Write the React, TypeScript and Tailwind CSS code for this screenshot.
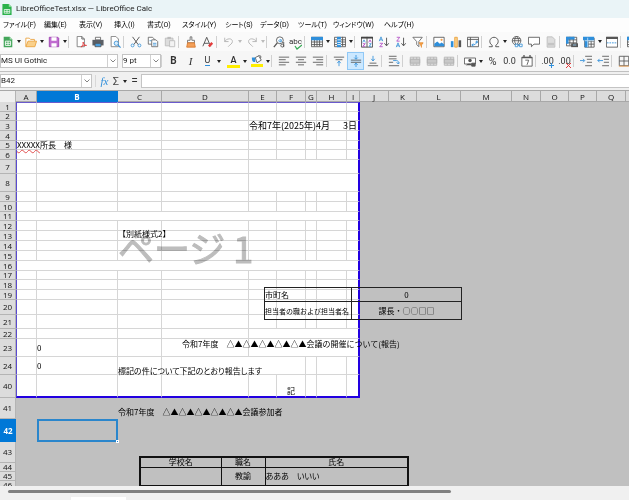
import React from "react";

const P = {
  stroke: "#555",
  strokeWidth: 1,
  fill: "none",
} as const;

const icons: Record<string, React.ReactNode> = {
  new: (
    <>
      <path d="M2 1h7l3 3v9H2z" fill="#43a65a" />
      <path d="M9 1l3 3H9z" fill="#a5dcb0" />
      <path d="M4 6h6v5H4zM4 8.500h6M7 6v5" stroke="#fff" fill="none" />
    </>
  ),
  open: (
    <>
      <path d="M1 12V2.500h4l1.500 1.500H11v2" fill="#fff" stroke="#e9a03b" />
      <path d="M1 12.500L3.500 6H13.500L11.500 12.500z" fill="#fad08a" stroke="#e9a03b" />
    </>
  ),
  save: (
    <>
      <path d="M1.500 1.500h10l1 1v10h-11z" fill="#c06bd0" stroke="#9b3fae" />
      <path d="M4 1.500h6v4H4zM4 8.500h6v4H4z" fill="#fff" />
    </>
  ),
  pdf: (
    <>
      <path d="M2.500 .5H8l3 3v9H2.500z" fill="#fff" stroke="#777" />
      <path d="M8 .5v3h3" {...P} />
      <path d="M7 13c2-2 3-4 2.500-6 0 3 2 4 4 4-3-.5-5 .5-6.500 2z" stroke="#e23b3b" fill="none" />
    </>
  ),
  print: (
    <>
      <path d="M4 1.500h6v3H4z" fill="#fff" stroke="#666" />
      <path d="M.5 4.500h13V11H.5z" fill="#5a5f66" />
      <path d="M3.500 8.500h7v4h-7z" fill="#4aa0e0" stroke="#555" />
    </>
  ),
  preview: (
    <>
      <path d="M2.500 .5H8l3 3v9H2.500z" fill="#fff" stroke="#777" />
      <circle cx="8.500" cy="8.500" r="2.500" fill="#d8ecfa" stroke="#3d93d6" />
      <path d="M10.500 10.500l3 3" stroke="#3d93d6" strokeWidth="1.300" />
    </>
  ),
  cut: (
    <>
      <path d="M3 1l6.500 9M11 1L4.500 10" stroke="#444" />
      <circle cx="3" cy="11" r="1.700" fill="none" stroke="#3d93d6" />
      <circle cx="11" cy="11" r="1.700" fill="none" stroke="#3d93d6" />
    </>
  ),
  copy: (
    <>
      <path d="M1.500 1.500h5l2 2v6h-7z" fill="#fff" stroke="#666" />
      <path d="M5.500 4.500h5l2 2v6h-7z" fill="#fff" stroke="#666" />
      <path d="M7 8.500h4M7 10.500h4M3 5.500h2" stroke="#3d93d6" />
    </>
  ),
  paste: (
    <>
      <path d="M1.500 2.500h9v9h-9z" fill="#ddd" stroke="#bbb" />
      <path d="M4 1h4v2.500H4z" fill="#bbb" />
      <path d="M6.500 5.500h6v7h-6z" fill="#f3f3f3" stroke="#bbb" />
    </>
  ),
  brush: (
    <>
      <path d="M6 1h2v4h3v3H3V5h3z" fill="#fff" stroke="#666" />
      <path d="M3 8h8l1 5H2z" fill="#f3a05a" stroke="#d8782c" />
    </>
  ),
  clear: (
    <>
      <path d="M1 12L5.500 1.500 10 12M2.500 8.500H8" stroke="#444" fill="none" />
      <path d="M7 11l4-4 2 2-4 4z" fill="#e23b3b" />
    </>
  ),
  undo: <path d="M2 2v4.500h4.500M2 6.500C4 2.500 11 2 11 6.500 11 9 8 10 6 12.500" stroke="#b0b0b0" fill="none" />,
  redo: <path d="M12 2v4.500H7.500M12 6.500C10 2.500 3 2 3 6.500 3 9 6 10 8 12.500" stroke="#b0b0b0" fill="none" />,
  find: (
    <>
      <circle cx="8" cy="5" r="4" fill="#fff" stroke="#555" />
      <path d="M5 8l-4 5" stroke="#555" strokeWidth="1.500" />
      <path d="M9.500 4v3M9.500 5.500a1.300 1.300 0 1 0 0 .2" stroke="#3d93d6" fill="none" />
      <path d="M12.500 7v6M12.500 11a1.700 1.700 0 1 0 0 .3" stroke="#444" fill="none" />
    </>
  ),
  table: (
    <>
      <path d="M.5 1.500h13v11H.5zM.5 7h13M.5 10h13M4 4v8M7 4v8M10 4v8" {...P} />
      <path d="M0 1h14v4H0z" fill="#2f8fdb" />
    </>
  ),
  cols: (
    <>
      <path d="M.5 1.500h13v11H.5zM.5 4.500h13M.5 7h13M.5 10h13M10 1v11" {...P} />
      <path d="M3.500 1H8v12H3.500z" fill="#2f8fdb" />
      <path d="M4 4.500h4M4 7.500h4M4 10h4" stroke="#fff" />
    </>
  ),
  sort: (
    <>
      <path d="M.5 1.500h13v11.500H.5z" fill="#fff" stroke="#444" />
      <path d="M0 1h14v2H0z" fill="#444" />
      <path d="M7 1v12" stroke="#444" />
      <path d="M2 7.500L3.500 4.500 5 7.500M9.500 9h2.500l-2.500 3h2.500" stroke="#3d93d6" fill="none" />
      <path d="M2 9h3l-3 3h3M9 7.500l1.500-3 1.500 3" stroke="#b14bc4" fill="none" />
    </>
  ),
  az: (
    <>
      <path d="M1.500 6L3.500 1l2 5M2 4.500h3" stroke="#3d93d6" fill="none" />
      <path d="M2 8.500h3.500L2 12.500h3.500" stroke="#b14bc4" fill="none" />
      <path d="M10 2v9M7.500 8.500L10 11.500l2.500-3" stroke="#444" fill="none" />
    </>
  ),
  za: (
    <>
      <path d="M1.500 13l2-5 2 5M2 11.500h3" stroke="#3d93d6" fill="none" />
      <path d="M2 1.500h3.500L2 6h3.500" stroke="#b14bc4" fill="none" />
      <path d="M10 2v9M7.500 8.500L10 11.500l2.500-3" stroke="#444" fill="none" />
    </>
  ),
  filter: (
    <>
      <path d="M1 1.500h11L8 6.500v6L5.500 10V6.500z" fill="#fff" stroke="#666" />
      <path d="M8 8h5l-2 2.500v3" fill="#f5a04a" stroke="#e58a2c" />
    </>
  ),
  image: (
    <>
      <path d="M1 1.500h12v11H1z" fill="#fff" stroke="#555" />
      <path d="M1.500 12V9L5 6.500l3 2.500 2-1.500 3 2V12z" fill="#2f8fdb" />
      <circle cx="10" cy="4.500" r="1.300" fill="#f5a04a" />
    </>
  ),
  chart: (
    <>
      <path d="M1 6h3v7H1z" fill="#2f8fdb" />
      <path d="M5.500 1.500h3V13h-3z" fill="#fad08a" stroke="#e9a03b" />
      <path d="M10 5h3v8h-3z" fill="#555" />
    </>
  ),
  pivot: (
    <>
      <path d="M.5 1.500h13v11H.5zM.5 4h13M4 1.500v11" {...P} />
      <path d="M6 10.500c3 0 5-1 5.500-4M10 7.500l1.500-2 1 2.500M7.500 9L5.500 10.500 7.500 12" stroke="#2f8fdb" fill="none" />
    </>
  ),
  omega: <path d="M1 12.500h4V11C0 8 2 1.500 7 1.500S14 8 9 11v1.500h4" stroke="#444" fill="none" />,
  link: (
    <>
      <circle cx="6.500" cy="5.500" r="5" {...P} />
      <path d="M1.500 5.500h10M2.500 3h8M6.500.5c-3 3-3 7 0 10M6.500.5c3 3 3 7 0 10" {...P} />
      <path d="M5 9.500h3v3H5zM10 9.500h3v3h-3zM8 11h2" fill="#fff" stroke="#3d93d6" />
    </>
  ),
  comment: <path d="M.5 1.500h13v8H7l-3 3v-3H.5z" fill="#fff" stroke="#555" />,
  page: (
    <>
      <path d="M2.500 1h6l3 3v9h-9z" fill="#ddd" stroke="#bbb" />
      <path d="M3.500 8h7v3h-7z" fill="#c4c4c4" />
    </>
  ),
  area: (
    <>
      <path d="M.5 1.500h12v10H.5zM.5 4.500h12M.5 8h12M4.500 1v10M8.500 1v10" {...P} />
      <path d="M0 1h10v3H0zM0 1h3v8H0z" fill="#2f8fdb" />
      <path d="M6 8.500h8V13H6z" fill="#555" />
      <path d="M8 10.500h4" stroke="#9cd0f5" />
    </>
  ),
  freeze: (
    <>
      <path d="M2 2.500h11v10.500H2zM2 6h11M2 9.500h11M6 2v11M9.500 2v11" {...P} />
      <path d="M0 1h6v4H0zM2 5h4v8H2zM6 1h7v4H6z" fill="#2f8fdb" />
      <path d="M5.500 2v11M2 5.500h11" stroke="#bfe0f8" />
    </>
  ),
  split: (
    <>
      <path d="M.5 1.500h13v11.500H.5z" fill="#fff" stroke="#555" />
      <path d="M0 1h14v2.500H0z" fill="#555" />
      <path d="M1 8h12" stroke="#2f8fdb" strokeDasharray="2 1" />
    </>
  ),
  left: <path d="M1 2.500h12M1 5.500h8M1 8.500h12M1 11.500h8" {...P} />,
  center: <path d="M1 2.500h12M3.500 5.500h7M1 8.500h12M3.500 11.500h7" {...P} />,
  right: <path d="M1 2.500h12M5 5.500h8M1 8.500h12M5 11.500h8" {...P} />,
  top: (
    <>
      <path d="M1 2.500h12M3 5.500h8" {...P} />
      <path d="M7 13V8M5 9.500L7 7l2 2.500" stroke="#2f8fdb" fill="none" />
    </>
  ),
  middle: (
    <>
      <path d="M1 6h12M1 8.500h12" {...P} />
      <path d="M7 0v4.500M5 3l2 2 2-2M7 14V9.500M5 11.500l2-2 2 2" stroke="#2f8fdb" fill="none" />
    </>
  ),
  bottom: (
    <>
      <path d="M1 12.500h12M3 9.500h8" {...P} />
      <path d="M7 1v5.500M5 4.500L7 7l2-2.500" stroke="#2f8fdb" fill="none" />
    </>
  ),
  wrap: (
    <>
      <path d="M1 1.500h9M1 4.500h9M1 8.500h5M1 12.500h12" {...P} />
      <path d="M6 6.500h4c2 0 2 1 2 3.500M10 8.500l2 2 2-2" stroke="#2f8fdb" fill="none" />
    </>
  ),
  merge: (
    <>
      <path d="M1.500 2.500h11v9.500h-11zM5 2.500V5M9 2.500V5M5 10v2M9 10v2" fill="#dedede" stroke="#b5b5b5" />
      <path d="M1.500 5h11v4.500h-11z" fill="#c8c8c8" stroke="#b0b0b0" />
    </>
  ),
  money: (
    <>
      <path d="M.5 3.500h13v7H.5z" fill="#fff" stroke="#555" />
      <circle cx="7" cy="6.500" r="2" fill="#555" />
      <path d="M3 12c0-2 6-2 6 0M9 9.500h4V13H9z" fill="#555" stroke="#555" />
    </>
  ),
  date: (
    <>
      <path d="M1 2.500h12V13H1z" fill="#fff" stroke="#555" />
      <path d="M1 3h12M3.500 0v3M10.500 0v3" stroke="#555" strokeWidth="1.500" />
      <path d="M5 6h4l-2 5.500" {...P} />
    </>
  ),
  indent: (
    <>
      <path d="M6 1.500h8M8 5h6M8 8.500h6M6 12.500h8" {...P} />
      <path d="M0 6.500h5M3.500 4.500l2 2-2 2" stroke="#2f8fdb" fill="none" />
    </>
  ),
  outdent: (
    <>
      <path d="M6 1.500h8M8 5h6M8 8.500h6M6 12.500h8" {...P} />
      <path d="M1 6.500h6M3 4.500l-2 2 2 2" stroke="#2f8fdb" fill="none" />
    </>
  ),
  borders: (
    <>
      <path d="M1.500 1.500h11v11h-11zM7 1.500v11M1.500 7h11" {...P} />
      <path d="M1 13h12" stroke="#f0a050" />
    </>
  ),
  fill: (
    <>
      <path d="M5 3l4-2 3 5-5 3zM9 1c0-2 4 0 2 3" fill="#fff" stroke="#555" />
      <path d="M1 3h4v5c-3 1-4-1-4-5z" fill="#2f8fdb" />
      <path d="M0 10.500h14V14H0z" fill="#ffee00" />
    </>
  ),
};

const mark = "absolute -bottom-[2px] right-0 size-[5px]";

const texts: Record<string, React.ReactNode> = {
  bold: <span className="text-[10px] font-bold">B</span>,
  italic: <span className="font-['Liberation_Serif'] text-[11px] italic">I</span>,
  underline: <span className="border-b border-[#2f8fdb] text-[9px]">U</span>,
  color: <span className="w-[13px] border-b-[3px] border-[#ffee00] text-center text-[9px] font-semibold leading-[10px]">A</span>,
  spell: (
    <span className="relative text-[8px]">
      abc
      <svg viewBox="0 0 8 6" className="absolute -bottom-1 right-0 h-[6px] w-2">
        <path d="M1 2l2 3 5-4" stroke="#35a853" strokeWidth="1.200" fill="none" />
      </svg>
    </span>
  ),
  percent: <span className="text-[11px]">%</span>,
  number: <span className="text-[9px]">0.0</span>,
  addDec: (
    <span className="relative text-[9px]">
      .00
      <svg viewBox="0 0 5 5" className={mark}>
        <path d="M2.500 0v5M0 2.500h5" stroke="#2f8fdb" />
      </svg>
    </span>
  ),
  delDec: (
    <span className="relative text-[9px]">
      .00
      <svg viewBox="0 0 5 5" className={mark}>
        <path d="M0 0l5 5M5 0L0 5" stroke="#e23b3b" />
      </svg>
    </span>
  ),
};

function Tool({ name }: { name: string }) {
  if (name === "|") return <span className="mr-[3px] h-3 w-px shrink-0 bg-[#d0d0d0]" />;
  if (name === "_") return <span className="w-[3px] shrink-0" />;
  if (name === "v" || name === "w")
    return (
      <button
        aria-label="メニューを開く"
        className={"flex w-[6px] shrink-0 items-center justify-center " + (name === "v" ? "text-[#222]" : "text-[#bbb]")}
      >
        <svg viewBox="0 0 4 3" className="h-[3px] w-1">
          <path d="M0 0h4L2 3z" fill="currentColor" />
        </svg>
      </button>
    );
  return (
    <button
      aria-label={name}
      className={
        "flex h-[18px] w-[17px] shrink-0 items-center justify-center leading-none text-[#333] " +
        (name === "middle" ? "border border-[#90c8f6] bg-[#cce8ff]" : "")
      }
    >
      {texts[name] ?? (
        <svg viewBox="0 0 14 14" className="size-3 shrink-0">
          {icons[name]}
        </svg>
      )}
    </button>
  );
}

const row1 =
  "new v open v save v | pdf print preview | cut copy paste | brush clear | undo w redo w | find spell | table v cols v | sort az za filter | image chart pivot | omega v link comment page | area freeze v split | table".split(" ");
const row2 =
  "| bold italic underline v _ color v fill v | left center right | top middle bottom | wrap | merge merge merge | money v percent number date | addDec delDec | indent outdent | borders".split(" ");

const menus: [string, string][] = [
  ["ファイル(F)", "w-[41px]"],
  ["編集(E)", "w-[35px]"],
  ["表示(V)", "w-[35px]"],
  ["挿入(I)", "w-[33px]"],
  ["書式(O)", "w-[35px]"],
  ["スタイル(Y)", "w-[43px]"],
  ["シート(S)", "w-[35px]"],
  ["データ(D)", "w-[38px]"],
  ["ツール(T)", "w-[35px]"],
  ["ウィンドウ(W)", "w-[51px]"],
  ["ヘルプ(H)", "w-[35px]"],
];

function Combo({ label, value, width }: { label: string; value: string; width: string }) {
  return (
    <div className={"relative h-[14px] shrink-0 border border-[#c4c4c4] bg-white " + width}>
      <select aria-label={label} className="block h-full w-full appearance-none bg-transparent text-[8px] leading-[12px] text-[#222]">
        <option>{value}</option>
      </select>
      <span className="pointer-events-none absolute inset-y-0 right-0 flex w-[10px] items-center justify-center border-l border-[#d0d0d0]">
        <svg viewBox="0 0 6 4" className="h-1 w-[6px]">
          <path d="M.5.5L3 3 5.500.5" stroke="#666" strokeWidth=".8" fill="none" />
        </svg>
      </span>
    </div>
  );
}

const columns: [string, number][] = [
  ["A", 21], ["B", 81], ["C", 44], ["D", 87], ["E", 28], ["F", 29], ["G", 11], ["H", 30], ["I", 13],
  ["J", 29], ["K", 28], ["L", 44], ["M", 51], ["N", 29], ["O", 28], ["P", 28], ["Q", 29], ["", 29],
];

type Row = { n: number; h: number; spans?: number[]; text?: Record<number, React.ReactNode> };

const merged = [1, 1, 1, 1, 5];
const rows: Row[] = [
  { n: 1, h: 10 },
  { n: 2, h: 9 },
  { n: 3, h: 10, text: { 4: "令和7年(2025年)4月　  3日" } },
  { n: 4, h: 10 },
  {
    n: 5,
    h: 9,
    text: {
      0: (
        <>
          <span className="underline decoration-[#e05050] decoration-wavy decoration-1 underline-offset-1">XXXXX</span>所長　様
        </>
      ),
    },
  },
  { n: 6, h: 10 },
  { n: 7, h: 14, spans: merged },
  { n: 8, h: 18, spans: merged },
  { n: 9, h: 10 },
  { n: 10, h: 10 },
  { n: 11, h: 9, spans: [9] },
  { n: 12, h: 10 },
  { n: 13, h: 10, text: { 2: "【別紙様式2】" } },
  { n: 14, h: 10 },
  { n: 15, h: 10 },
  { n: 16, h: 10, spans: [9] },
  { n: 17, h: 9 },
  { n: 18, h: 10 },
  { n: 19, h: 10 },
  { n: 20, h: 15 },
  { n: 21, h: 14 },
  { n: 22, h: 10, spans: merged },
  { n: 23, h: 18, spans: merged, text: { 1: "0", 3: "令和7年度　△▲△▲△▲△▲△▲会議の開催について(報告)" } },
  { n: 24, h: 18, spans: [1, 1, 1, 3, 1, 1, 1], text: { 1: "0", 2: "標記の件について下記のとおり報告します" } },
  { n: 40, h: 23, text: { 5: "記" } },
];

const cellStyle: Record<string, string> = {
  "3-4": "align-middle whitespace-pre text-[9px]",
  "5-0": "align-middle",
  "13-2": "align-top leading-[6px] text-[8px]",
  "23-1": "align-middle",
  "24-1": "align-middle",
  "23-3": "align-top pl-5 leading-[10px]",
  "24-2": "align-bottom leading-[6px] [font-feature-settings:'palt']",
  "40-5": "align-bottom text-center leading-[10px]",
};

const numberCell = "border-b border-r border-[#b4b4b4] bg-[#dcdcdc] p-0 text-center font-['Open_Sans'] text-[8px] font-normal leading-[8px] text-[#111]";

function Sheet() {
  return (
    <table className="w-[655px] table-fixed border-separate border-spacing-0 font-['Noto_Sans_CJK_JP',sans-serif] text-[8px] leading-[8px] text-black">
      <colgroup>
        <col className="w-4" />
        {columns.map(([c, w]) => (
          <col key={c} style={{ width: w }} />
        ))}
      </colgroup>
      <thead>
        <tr className="h-[11px]">
          <th className="border-r border-[#b4b4b4] bg-[#f0f0f0] p-0" />
          {columns.map(([c]) => (
            <th
              key={c}
              className={
                "border-b border-r p-0 font-['Open_Sans'] text-[8px] leading-[9px] " +
                (c === "B"
                  ? "border-[#0078d7] bg-[#0078d7] font-bold text-white"
                  : "border-[#a8a8a8] bg-[#dcdcdc] font-normal text-[#111]")
              }
            >
              {c}
            </th>
          ))}
        </tr>
      </thead>
      <tbody>
        {rows.map((r) => {
          let at = 0;
          return (
            <tr key={r.n} style={{ height: r.h }}>
              <th className={numberCell}>{r.n}</th>
              {(r.spans ?? [1, 1, 1, 1, 1, 1, 1, 1, 1]).map((s) => {
                const c = at;
                at += s;
                const edge = [
                  at === 9 ? "border-r-2 border-r-[#2200e0]" : "border-r border-r-[#d6d6d6]",
                  r.n === 40 ? "border-b-2 border-b-[#2200e0]" : "border-b border-b-[#d6d6d6]",
                  c === 0 ? "border-l border-l-[#5a4bd0]" : "",
                  r.n === 1 ? "border-t border-t-[#6a5acd]" : "",
                ].join(" ");
                return (
                  <td
                    key={c}
                    colSpan={s}
                    className={"bg-white p-0 " + edge + " " + (cellStyle[r.n + "-" + c] ?? "") + (r.n === 3 ? "" : " whitespace-nowrap")}
                  >
                    {r.text?.[c]}
                  </td>
                );
              })}
              <td colSpan={9} className="bg-[#c0c0c0] p-0" />
            </tr>
          );
        })}
        <tr className="h-[21px]">
          <th className={numberCell}>41</th>
          <td colSpan={2} className="p-0" />
          <td className="whitespace-nowrap p-0 pt-[6px] align-middle">令和7年度　△▲△▲△▲△▲△▲会議参加者</td>
          <td colSpan={15} className="p-0" />
        </tr>
        <tr className="h-[23px]">
          <th className="bg-[#0078d7] p-0 text-center font-['Open_Sans'] text-[8px] font-bold text-white">42</th>
          <td className="p-0" />
          <td className="relative border-2 border-[#2a86cc] p-0">
            <span className="absolute -bottom-[3px] -right-[3px] size-[3px] border border-white bg-[#2a86cc]" />
          </td>
          <td colSpan={16} className="p-0" />
        </tr>
        {[[43, 21], [44, 8], [45, 7], [46, 9]].map(([n, h]) => (
          <tr key={n} style={{ height: h }}>
            <th className={numberCell + " leading-[6px]"}>{n}</th>
            <td colSpan={18} className="p-0" />
          </tr>
        ))}
      </tbody>
    </table>
  );
}

export default function App() {
  return (
    <div className="flex h-screen w-full flex-col overflow-hidden bg-[#f0f0f0] font-['Roboto','Noto_Sans_CJK_JP',sans-serif] text-[#222]">
      <header className="flex h-[18px] shrink-0 items-center gap-1 bg-[#eaf4f7] pl-[2px]">
        <svg viewBox="0 0 10 12" className="h-[11px] w-[10px]">
          <path d="M0 0h7l3 3v9H0z" fill="#2bb24c" />
          <path d="M7 0l3 3H7z" fill="#9be3a9" />
          <path d="M2 6h6v4H2zM2 8h6M5 6v4" stroke="#fff" strokeWidth=".8" fill="none" />
        </svg>
        <h1 className="whitespace-nowrap text-[8px] leading-none">LibreOfficeTest.xlsx — LibreOffice Calc</h1>
      </header>

      <nav className="flex h-[14px] shrink-0 items-center bg-[#fdfdfd] pl-[3px]">
        {menus.map(([m, w]) => (
          <button key={m} className={"shrink-0 whitespace-nowrap text-left text-[7px] leading-none text-black [font-feature-settings:'palt'] " + w}>
            {m}
          </button>
        ))}
      </nav>

      <div className="-ml-px flex h-[19px] shrink-0 items-center overflow-hidden bg-[#fafafa]">
        {row1.map((t, i) => (
          <Tool key={i} name={t} />
        ))}
      </div>
      <div className="flex h-5 shrink-0 items-center overflow-hidden bg-[#f6f6f6]">
        <Combo label="フォント名" value="MS UI Gothic" width="w-[118px]" />
        <span className="w-1 shrink-0" />
        <Combo label="フォントサイズ" value="9 pt" width="w-[39px]" />
        {row2.map((t, i) => (
          <Tool key={i} name={t} />
        ))}
      </div>

      <div className="flex h-[19px] shrink-0 items-center border-t border-[#c0c0c0] bg-[#f0f0f0]">
        <Combo label="名前ボックス" value="B42" width="w-[92px]" />
        <span className="mx-[3px] h-3 w-px bg-[#d8d8d8]" />
        <button className="w-[11px] font-['Liberation_Serif'] text-[11px] italic leading-none text-[#2f8fdb]">fx</button>
        <button className="w-3 text-[11px] leading-none text-[#444]">Σ</button>
        <Tool name="v" />
        <button className="w-[13px] text-[12px] leading-none text-[#333]">=</button>
        <input aria-label="数式入力" className="h-[14px] min-w-0 flex-1 border border-r-0 border-[#c4c4c4] bg-white text-[8px]" />
      </div>

      <main className="relative min-h-0 flex-1 overflow-hidden border-t border-[#a8a8a8] bg-[#c0c0c0]">
        <Sheet />

        <p className="absolute left-[118px] top-[136px] whitespace-nowrap font-['Noto_Sans_CJK_JP',sans-serif] text-[36px] leading-[40px] text-[#bdbdbd] mix-blend-multiply [-webkit-text-stroke:1px_#bdbdbd]">
          ページ 1
        </p>

        <table className="absolute left-[264px] top-[196px] h-[33px] w-[198px] table-fixed border-collapse font-['Noto_Sans_CJK_JP',sans-serif] text-[8px] leading-[10px] text-black">
          <tbody>
            <tr className="h-[14px]">
              <td className="w-[87px] whitespace-nowrap border border-[#222] p-0">市町名</td>
              <td className="border border-[#222] p-0 text-center">0</td>
            </tr>
            <tr className="h-[18px]">
              <td className="whitespace-nowrap border border-[#222] p-0 text-[7px]">担当者の職および担当者名</td>
              <td className="border border-[#222] p-0 text-center">課長・○○□□</td>
            </tr>
          </tbody>
        </table>

        <table className="absolute left-[139px] top-[365px] w-[270px] table-fixed border-collapse border-2 border-[#111] font-['Noto_Sans_CJK_JP',sans-serif] text-[8px] leading-[8px] text-black">
          <thead>
            <tr className="h-[10px]">
              <th className="w-[81px] border border-[#111] p-0 font-normal">学校名</th>
              <th className="w-[44px] border border-[#111] p-0 font-normal">職名</th>
              <th className="border border-[#111] p-0 font-normal">氏名</th>
            </tr>
          </thead>
          <tbody>
            <tr className="h-[18px]">
              <td className="border border-[#111] p-0" />
              <td className="border border-[#111] p-0 text-center">教諭</td>
              <td className="border border-[#111] p-0 [font-feature-settings:'palt']">あああ　いいい</td>
            </tr>
            <tr className="h-4">
              <td className="border border-[#111] p-0" />
              <td className="border border-[#111] p-0" />
              <td className="border border-[#111] p-0" />
            </tr>
          </tbody>
        </table>
      </main>

      <footer className="flex h-[14px] shrink-0 flex-col justify-between overflow-hidden bg-[#f0f0f0]">
        <div className="ml-2 mt-1 h-[3px] w-[443px] rounded-full bg-[#808080]" />
        <div className="flex h-[3px] pl-[71px]">
          <span className="w-[55px] bg-white" />
        </div>
      </footer>
    </div>
  );
}
